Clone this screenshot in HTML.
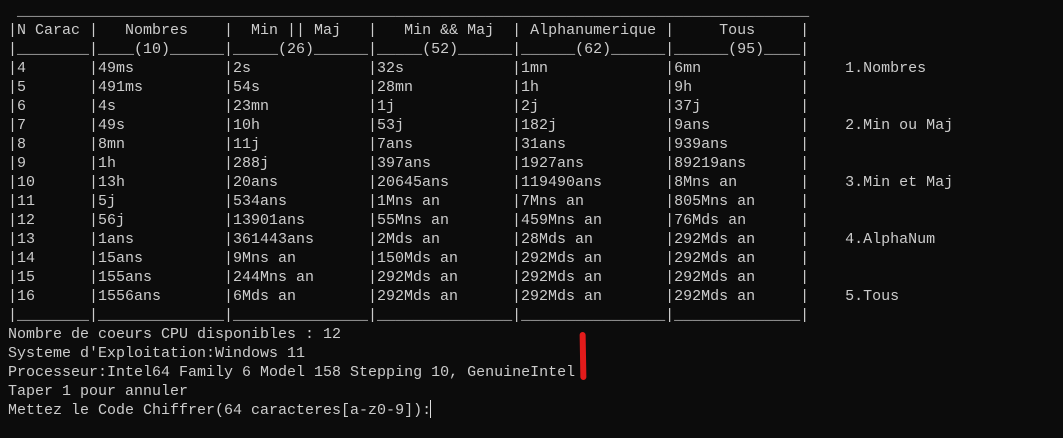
<!DOCTYPE html>
<html><head><meta charset="utf-8"><style>
html,body{margin:0;padding:0;background:#0c0c0c;width:1063px;height:438px;overflow:hidden}
#t{position:absolute;left:8px;top:2px;font-family:"Liberation Mono",monospace;font-size:15px;line-height:19px;color:#cccccc;white-space:pre}
#t div{height:19px}
#t span{display:inline-block}
.a{width:9ch}.b{width:15ch}.c{width:16ch}.d{width:16ch}.e{width:17ch}.f{width:15ch}
#red{position:absolute;left:580px;top:332px;width:6px;height:48px;background:#e31b1b;border-radius:3px;transform:rotate(-1deg)}
#cur{position:absolute;left:430px;top:400px;width:1px;height:18px;background:#ddd}
</style></head><body>
<div id="t"><div> ________________________________________________________________________________________</div><div>|N Carac |   Nombres    |  Min || Maj   |   Min &amp;&amp; Maj  | Alphanumerique |     Tous     |</div><div>|________|____(10)______|_____(26)______|_____(52)______|______(62)______|______(95)____|</div><div><span class="a">|4</span><span class="b">|49ms</span><span class="c">|2s</span><span class="d">|32s</span><span class="e">|1mn</span><span class="f">|6mn</span>|    1.Nombres</div><div><span class="a">|5</span><span class="b">|491ms</span><span class="c">|54s</span><span class="d">|28mn</span><span class="e">|1h</span><span class="f">|9h</span>|</div><div><span class="a">|6</span><span class="b">|4s</span><span class="c">|23mn</span><span class="d">|1j</span><span class="e">|2j</span><span class="f">|37j</span>|</div><div><span class="a">|7</span><span class="b">|49s</span><span class="c">|10h</span><span class="d">|53j</span><span class="e">|182j</span><span class="f">|9ans</span>|    2.Min ou Maj</div><div><span class="a">|8</span><span class="b">|8mn</span><span class="c">|11j</span><span class="d">|7ans</span><span class="e">|31ans</span><span class="f">|939ans</span>|</div><div><span class="a">|9</span><span class="b">|1h</span><span class="c">|288j</span><span class="d">|397ans</span><span class="e">|1927ans</span><span class="f">|89219ans</span>|</div><div><span class="a">|10</span><span class="b">|13h</span><span class="c">|20ans</span><span class="d">|20645ans</span><span class="e">|119490ans</span><span class="f">|8Mns an</span>|    3.Min et Maj</div><div><span class="a">|11</span><span class="b">|5j</span><span class="c">|534ans</span><span class="d">|1Mns an</span><span class="e">|7Mns an</span><span class="f">|805Mns an</span>|</div><div><span class="a">|12</span><span class="b">|56j</span><span class="c">|13901ans</span><span class="d">|55Mns an</span><span class="e">|459Mns an</span><span class="f">|76Mds an</span>|</div><div><span class="a">|13</span><span class="b">|1ans</span><span class="c">|361443ans</span><span class="d">|2Mds an</span><span class="e">|28Mds an</span><span class="f">|292Mds an</span>|    4.AlphaNum</div><div><span class="a">|14</span><span class="b">|15ans</span><span class="c">|9Mns an</span><span class="d">|150Mds an</span><span class="e">|292Mds an</span><span class="f">|292Mds an</span>|</div><div><span class="a">|15</span><span class="b">|155ans</span><span class="c">|244Mns an</span><span class="d">|292Mds an</span><span class="e">|292Mds an</span><span class="f">|292Mds an</span>|</div><div><span class="a">|16</span><span class="b">|1556ans</span><span class="c">|6Mds an</span><span class="d">|292Mds an</span><span class="e">|292Mds an</span><span class="f">|292Mds an</span>|    5.Tous</div><div>|________|______________|_______________|_______________|________________|______________|</div><div>Nombre de coeurs CPU disponibles : 12</div><div>Systeme d'Exploitation:Windows 11</div><div>Processeur:Intel64 Family 6 Model 158 Stepping 10, GenuineIntel</div><div>Taper 1 pour annuler</div><div>Mettez le Code Chiffrer(64 caracteres[a-z0-9]):</div></div>
<div id="red"></div><div id="cur"></div>
</body></html>
